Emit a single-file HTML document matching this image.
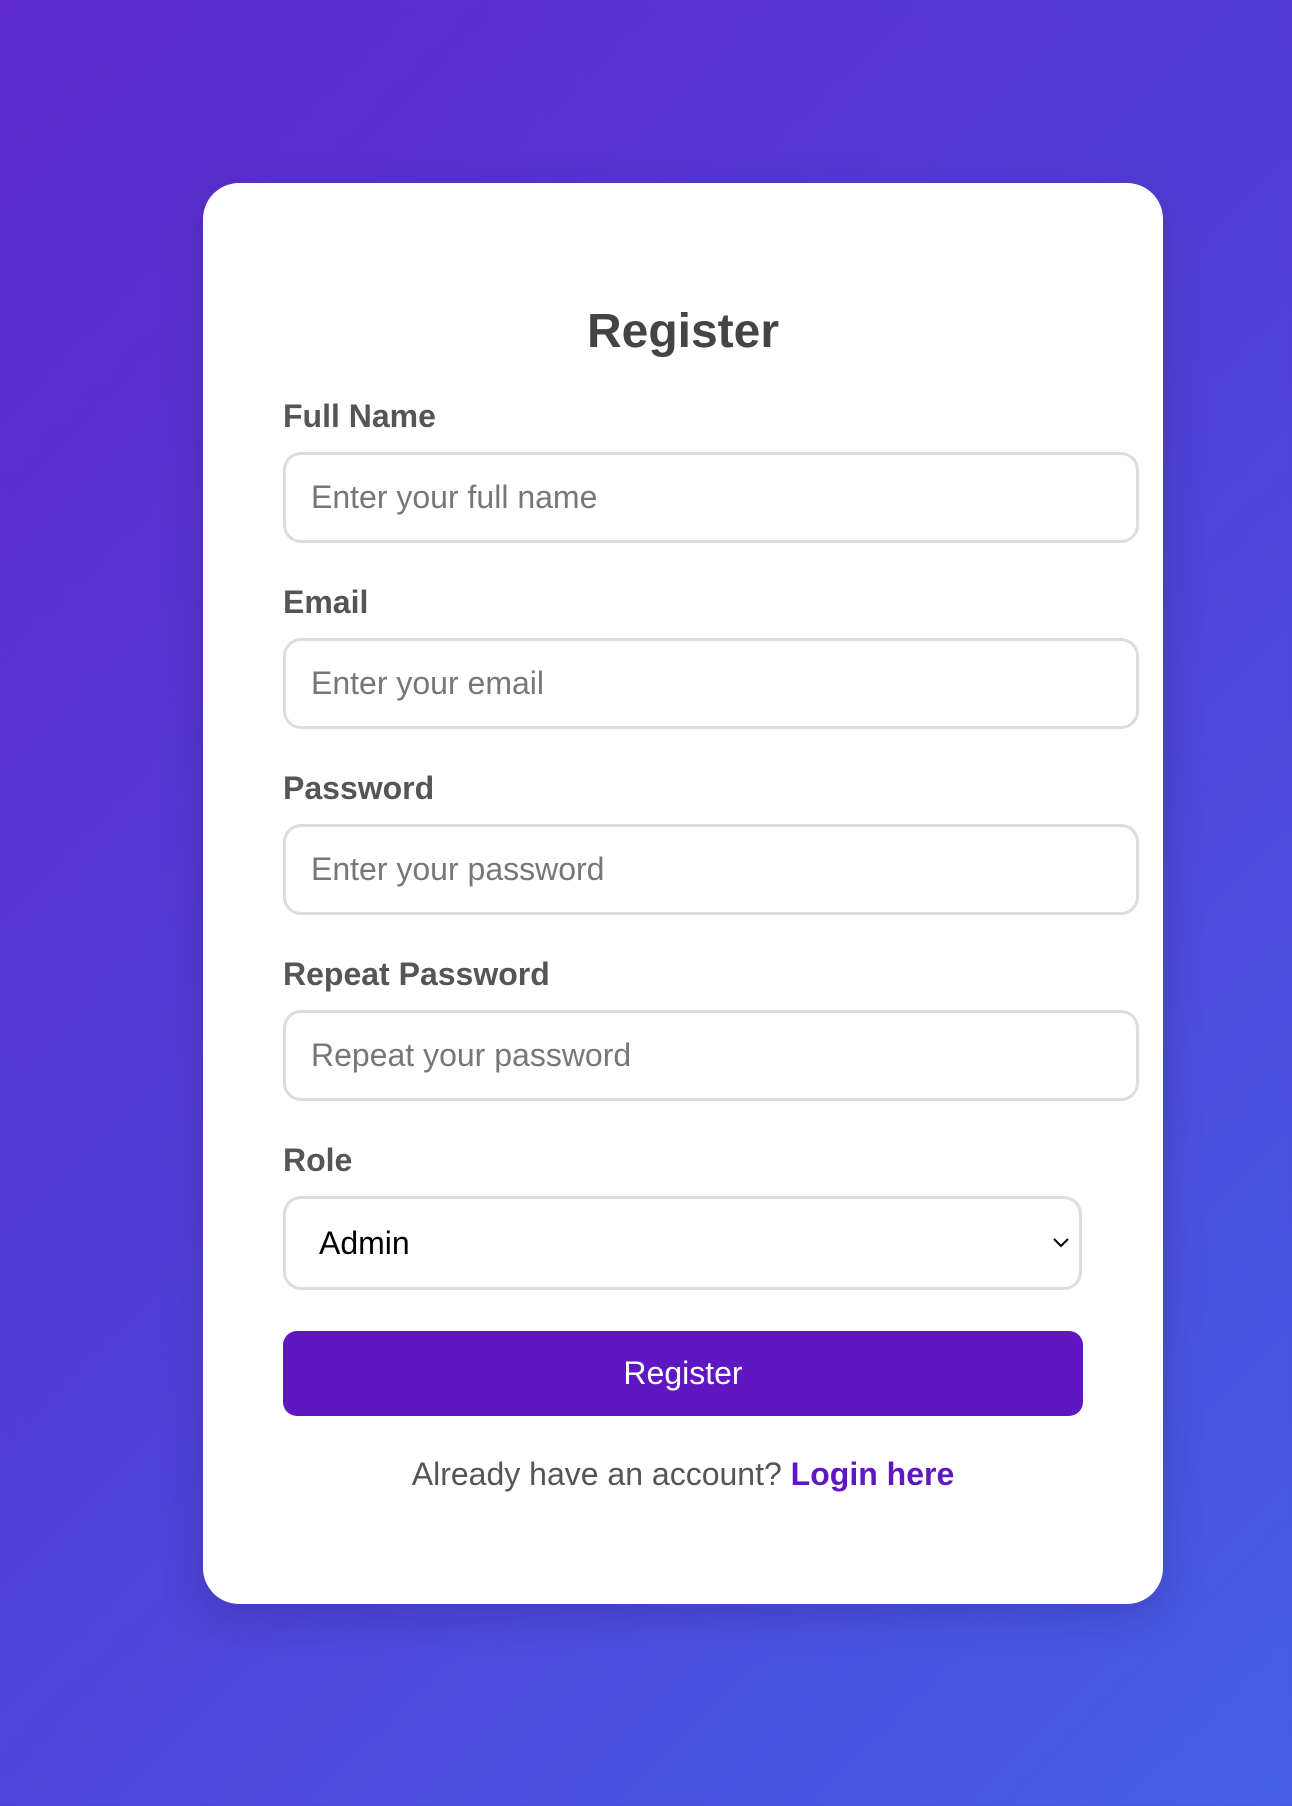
<!DOCTYPE html>
<html><head><meta charset="utf-8"><style>
*{box-sizing:border-box;margin:0;padding:0}
html,body{width:1292px;height:1806px;overflow:hidden}
body{background:linear-gradient(135deg,#5d29cc 0%,#5140d8 50%,#455fe6 100%);font-family:"Liberation Sans",Arial,sans-serif;position:relative}
.card{position:absolute;left:203px;top:183px;width:960px;height:1421px;background:#fff;border-radius:36px;box-shadow:0 12px 40px rgba(30,20,90,.25)}
h1{position:absolute;left:0;top:308px;text-align:center;font-size:48px;font-weight:bold;color:#444;line-height:1}
.lbl{position:absolute;left:283px;font-size:32px;font-weight:bold;color:#555;line-height:1}
.inp{position:absolute;left:283px;width:856px;height:91px;border:3px solid #ddd;border-radius:18px;background:#fff;font-size:32px;color:#777;padding-left:25px;line-height:85px}
.sel{width:799px;color:#000;padding-left:33px}
.chev{position:absolute;right:8px;top:36px}
.btn{position:absolute;left:283px;top:1331px;width:800px;height:85px;background:#5f17c3;border-radius:14px;color:#fff;font-size:32px;text-align:center;line-height:85px}
.foot{position:absolute;left:0;top:1456px;text-align:center;font-size:32px;color:#555}
.foot b{color:#5f17c3}
</style></head><body>
<div class="card"></div>
<h1 style="width:1366px">Register</h1>
<div class="lbl" style="top:400px">Full Name</div>
<div class="inp" style="top:452px">Enter your full name</div>
<div class="lbl" style="top:586px">Email</div>
<div class="inp" style="top:638px">Enter your email</div>
<div class="lbl" style="top:772px">Password</div>
<div class="inp" style="top:824px">Enter your password</div>
<div class="lbl" style="top:958px">Repeat Password</div>
<div class="inp" style="top:1010px">Repeat your password</div>
<div class="lbl" style="top:1144px">Role</div>
<div class="inp sel" style="top:1196px;height:94px;line-height:88px">Admin<svg class="chev" width="20" height="14" viewBox="0 0 20 14"><path d="M3 4l7 7 7-7" fill="none" stroke="#000" stroke-width="2"/></svg></div>
<div class="btn">Register</div>
<div class="foot" style="width:1366px">Already have an account? <b>Login here</b></div>
</body></html>
